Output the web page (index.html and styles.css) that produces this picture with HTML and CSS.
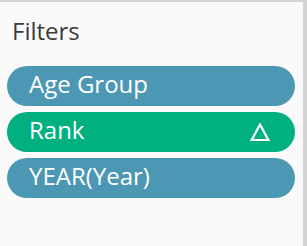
FILE: index.html
```html
<!DOCTYPE html>
<html>
<head>
<meta charset="utf-8">
<link rel="stylesheet" href="styles.css">
</head>
<body>
<div class="panel">
  <div class="title">Filters</div>
  <div class="pills">
    <div class="pill blue"><span>Age Group</span></div>
    <div class="pill green"><span>Rank</span>
      <svg class="delta" width="20" height="20" viewBox="0 0 20 20"><path d="M10 2.5 L18.3 18 L1.7 18 Z" fill="none" stroke="#fff" stroke-width="2.2" stroke-linejoin="miter"/></svg>
    </div>
    <div class="pill blue"><span>YEAR(Year)</span></div>
  </div>
</div>
</body>
</html>
```
FILE: styles.css
```css
html, body { margin: 0; padding: 0; }
body { width: 307px; height: 246px; background: #d4d4d4; overflow: hidden; }
.panel {
  box-sizing: border-box;
  margin-top: 2px;
  width: 303px;
  height: 244px;
  background: #fafafa;
  padding: 13px 8px 0 7px;
  font-family: "Open Sans", sans-serif;
}
.title {
  font-size: 24px;
  line-height: 32px;
  color: #3a3a3a;
  padding-left: 5px;
}
.pills { display: flex; flex-direction: column; gap: 6px; margin-top: 19px; }
.pill {
  box-sizing: border-box;
  height: 40px;
  border-radius: 20px;
  display: flex;
  align-items: center;
  justify-content: space-between;
  padding: 0 25px 4px 22px;
  color: #fff;
  font-size: 24px;
  line-height: 32px;
}
.blue { background: #4b97b4; }
.green { background: #00b07e; }
.delta { display: block; margin-top: 4px; }
```
